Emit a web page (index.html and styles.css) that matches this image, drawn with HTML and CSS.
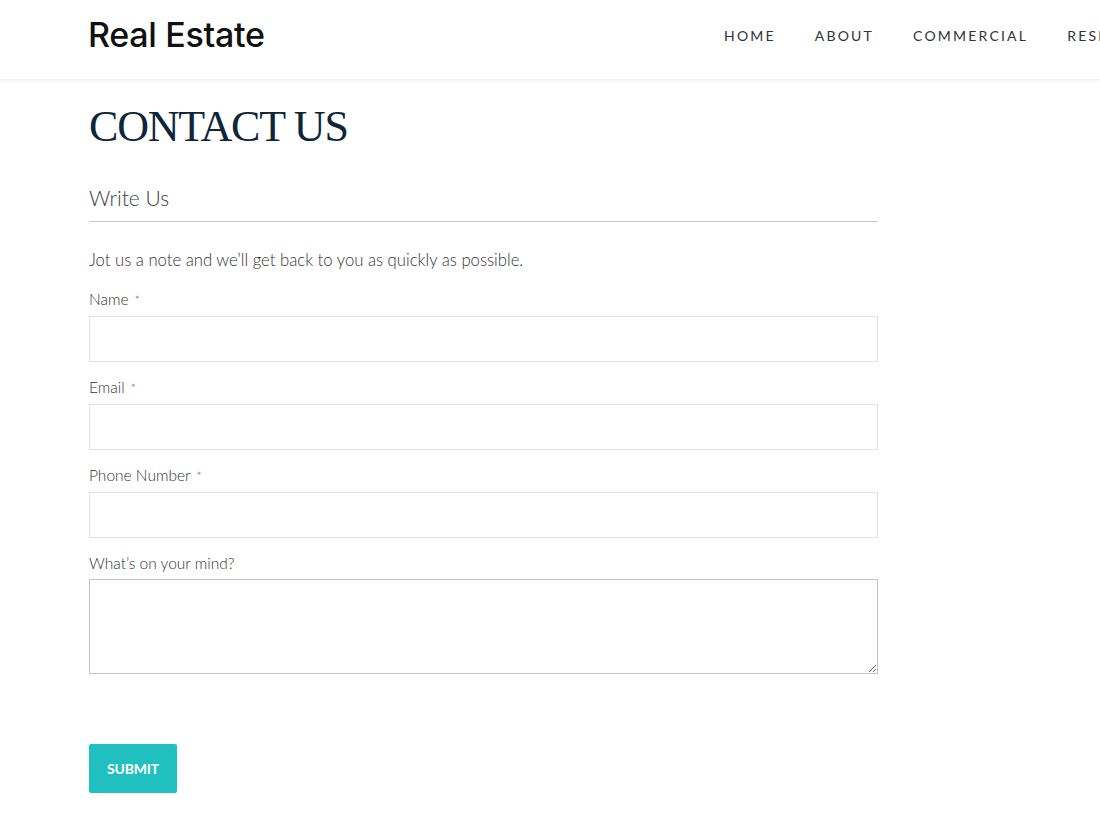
FILE: index.html
```html
<!DOCTYPE html>
<html lang="en">
<head>
<meta charset="utf-8">
<title>Contact Us - Real Estate</title>
<link rel="stylesheet" href="styles.css">
</head>
<body>
<header class="site-header">
  <div class="header-inner">
    <div class="logo">Real Estate</div>
    <nav class="nav">
      <a href="#">HOME</a>
      <a href="#">ABOUT</a>
      <a href="#">COMMERCIAL</a>
      <a href="#">RESIDENTIAL</a>
    </nav>
  </div>
</header>
<main class="main">
  <h1 class="page-title">CONTACT US</h1>
  <section class="form-section">
    <h2 class="section-title">Write Us</h2>
    <p class="intro">Jot us a note and we’ll get back to you as quickly as possible.</p>
    <form class="form">
      <div class="field">
        <label class="label">Name <span class="req">*</span></label>
        <input class="input" type="text">
      </div>
      <div class="field">
        <label class="label">Email <span class="req">*</span></label>
        <input class="input" type="email">
      </div>
      <div class="field">
        <label class="label">Phone Number <span class="req">*</span></label>
        <input class="input" type="tel">
      </div>
      <div class="field">
        <label class="label">What’s on your mind?</label>
        <textarea class="textarea"></textarea>
      </div>
      <button class="submit" type="button">SUBMIT</button>
    </form>
  </section>
</main>
</body>
</html>
```

FILE: styles.css
```css
html, body {
  margin: 0;
  padding: 0;
  overflow-x: hidden;
  background: #fff;
}
body {
  font-family: Lato, "Open Sans", sans-serif;
  color: #333;
}
.site-header {
  height: 80px;
  background: #fff;
  box-shadow: 0 1px 4px rgba(0, 0, 0, 0.06);
  border-bottom: 1px solid #f0f0f0;
  box-sizing: border-box;
  overflow: hidden;
}
.header-inner {
  display: grid;
  grid-template-columns: 636px max-content;
  align-items: center;
  height: 100%;
  padding-left: 88px;
  padding-bottom: 10px;
  box-sizing: border-box;
}
.logo {
  font-family: Inter, "Open Sans", sans-serif;
  font-size: 34px;
  font-weight: 500;
  color: #111;
  letter-spacing: -0.3px;
  padding-bottom: 1px;
}
.nav {
  display: flex;
  gap: 39px;
  white-space: nowrap;
  padding-top: 2px;
}
.nav a {
  font-family: Lato, sans-serif;
  font-size: 14px;
  letter-spacing: 2.2px;
  color: #2f3438;
  text-decoration: none;
}
.main {
  padding-left: 89px;
  width: 789px;
}
.page-title {
  margin: 17px 0 0;
  font-family: "Liberation Serif", serif;
  font-weight: normal;
  font-size: 44px;
  line-height: 60px;
  color: #0d2638;
  letter-spacing: -1.2px;
}
.section-title {
  margin: 27px 0 0;
  font-family: Lato, sans-serif;
  font-weight: 300;
  font-size: 21px;
  line-height: 28px;
  color: #3d4246;
  padding-bottom: 9px;
  border-bottom: 1px solid #c8c8c8;
}
.intro {
  margin: 26px 0 0;
  font-weight: 300;
  font-size: 16.7px;
  line-height: 24px;
  color: #333;
}
.form {
  display: flex;
  flex-direction: column;
}
.field {
  display: flex;
  flex-direction: column;
  margin-top: 17px;
}
.field + .field {
  margin-top: 15px;
}
.label {
  font-weight: 300;
  font-size: 15.5px;
  line-height: 20px;
  color: #333;
  margin-bottom: 6px;
}
.req {
  color: #c0392b;
  font-size: 12px;
  margin-left: 2px;
  vertical-align: 1px;
}
.input {
  height: 46px;
  box-sizing: border-box;
  border: 1px solid #e3e3e3;
  border-radius: 0;
  background: #fff;
  font-family: Lato, sans-serif;
  font-size: 15px;
  padding: 0 10px;
  margin: 0;
}
.textarea {
  height: 95px;
  box-sizing: border-box;
  border: 1px solid #c4c4c4;
  border-radius: 0;
  background: #fff;
  font-family: Lato, sans-serif;
  font-size: 15px;
  padding: 8px 10px;
  margin: 0;
  resize: vertical;
}
.submit {
  align-self: flex-start;
  margin-top: 70px;
  width: 88px;
  height: 49px;
  background: #20bfc0;
  border: none;
  border-radius: 2px;
  color: #fff;
  font-family: Lato, sans-serif;
  font-weight: 700;
  font-size: 14px;
  letter-spacing: -0.2px;
  padding: 0;
}
```
